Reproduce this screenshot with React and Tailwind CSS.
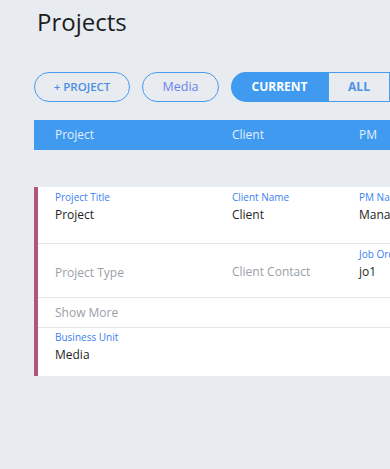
import React from "react";

const label = "text-[10px] leading-[14px] text-[#3a7ff0]";
const value = "mt-[2px] text-[12px] leading-[18px] text-[#1d1f24]";
const muted = "mt-[2px] text-[12px] leading-[18px] text-[#9ba0a7]";

const Field = ({ title, text, placeholder }) => (
  <div className="flex flex-col">
    <span className={label}>{title || "\u00a0"}</span>
    <span className={placeholder ? muted : value}>{text}</span>
  </div>
);

const App = () => {
  return (
    <div
      className="w-[390px] h-[469px] overflow-hidden bg-[#e8ebf0]"
      style={{ fontFamily: "'Open Sans', sans-serif" }}
    >
      <div className="w-[640px] pl-[34px]">
        <h1 className="pl-[3px] pt-[4px] text-[24px] leading-[36px] text-[#1b1d21]">
          Projects
        </h1>

        {/* actions */}
        <div className="mt-[32px] flex items-center gap-3">
          <button className="h-[30px] w-[96px] rounded-full border border-[#4a9aee] text-[11.5px] font-semibold text-[#4a8fe4]">
            + PROJECT
          </button>
          <button className="h-[30px] w-[77px] rounded-full border border-[#4a9aee] text-[12.5px] text-[#6a84ea]">
            Media
          </button>
          <div className="flex h-[30px]">
            <button className="w-[97px] rounded-l-full bg-[#3f9af0] text-[12px] font-bold text-white">
              CURRENT
            </button>
            <button className="w-[62px] border border-[#4a9aee] text-[12px] font-bold text-[#4a8fe4]">
              ALL
            </button>
          </div>
        </div>

        {/* table header */}
        <div className="mt-[18px] flex h-[30px] items-center bg-[#3f9af0] text-[12px] text-[#e4f0ff]">
          <span className="w-[198px] pl-[21px]">Project</span>
          <span className="w-[127px]">Client</span>
          <span>PM</span>
        </div>

        {/* card */}
        <div className="mt-[37px] border-l-4 border-[#b0567b] bg-white">
          <div className="flex h-[56px] pl-[17px] pt-[3px]">
            <div className="w-[177px]"><Field title="Project Title" text="Project" /></div>
            <div className="w-[127px]"><Field title="Client Name" text="Client" /></div>
            <Field title="PM Name" text="Manager" />
          </div>
          <div className="flex h-[54px] border-t border-[#e3e5e8] pl-[17px] pt-[3px]">
            <div className="w-[177px] pt-[1px]"><Field text="Project Type" placeholder /></div>
            <div className="w-[127px]"><Field text="Client Contact" placeholder /></div>
            <Field title="Job Order" text="jo1" />
          </div>
          <div className="flex h-[30px] items-center border-t border-[#e3e5e8] pl-[17px]">
            <span className="text-[12px] leading-[18px] text-[#9ba0a7]">Show More</span>
          </div>
          <div className="h-[49px] border-t border-[#e3e5e8] pl-[17px] pt-[2px]">
            <Field title="Business Unit" text="Media" />
          </div>
        </div>
      </div>
    </div>
  );
};

export default App;
